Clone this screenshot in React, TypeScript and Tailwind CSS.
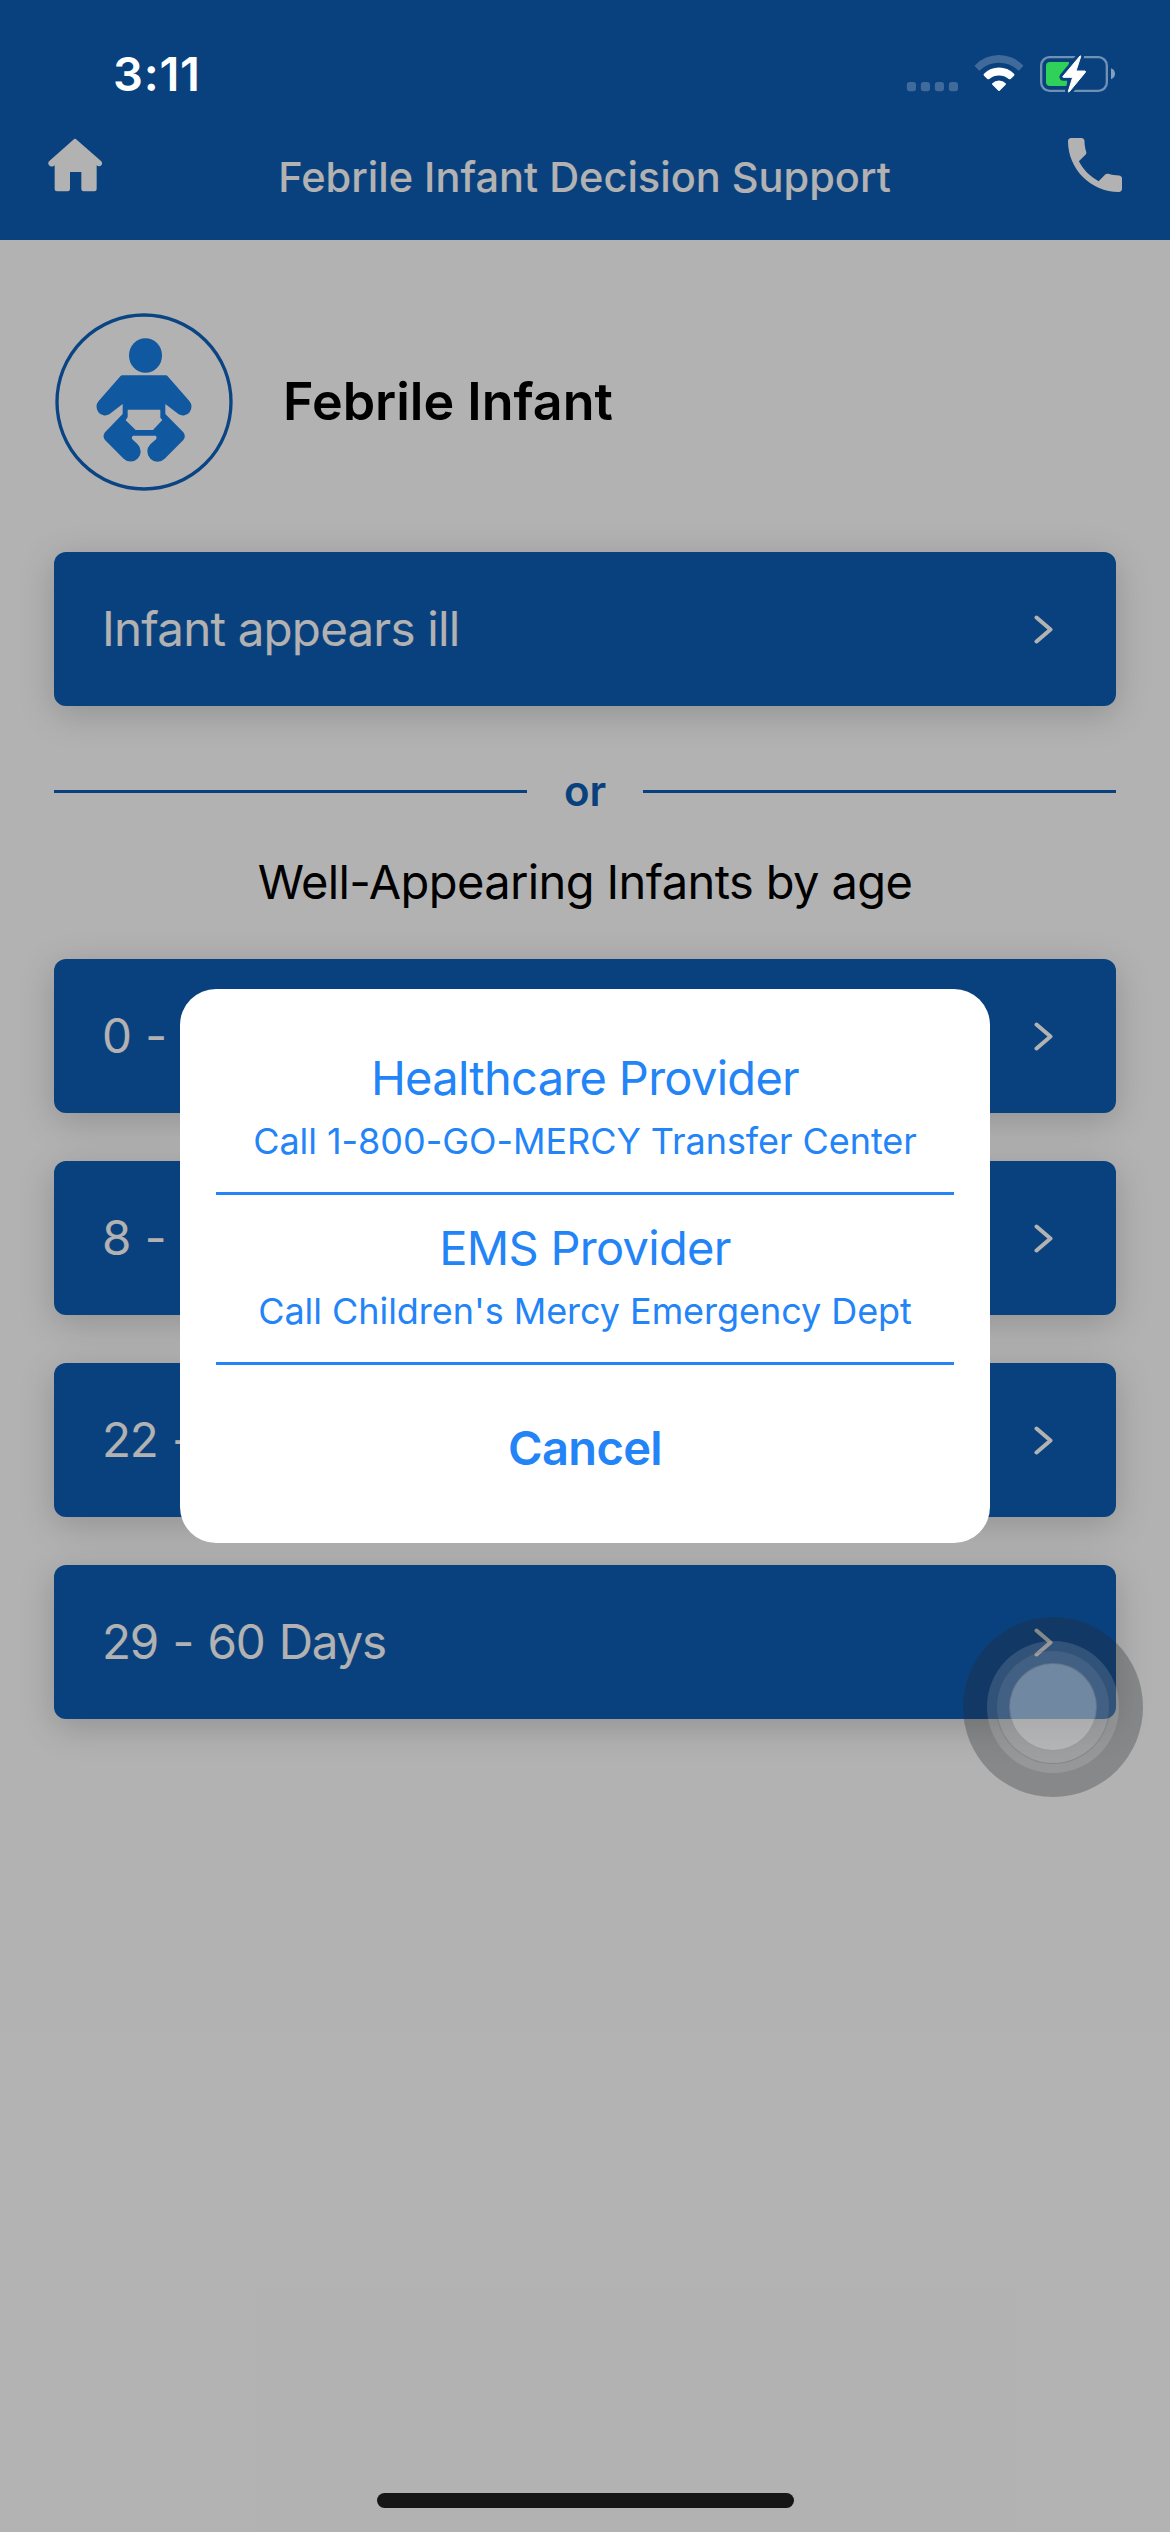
import React from "react";
import { MdPhone } from "react-icons/md";

const ageRanges = ["0 - 7 Days", "8 - 21 Days", "22 - 28 Days", "29 - 60 Days"];

function HomeIcon() {
  return (
    <svg viewBox="24 24 162 162" className="mt-[34px] h-[54px] w-[54px] shrink-0" fill="#ffffff">
      <path d="M100 29Q105 24 110 29L183 93Q189 99 184 106Q179 111 172 107L170 106V177Q170 184 163 184H131Q124 184 124 177V126H90V177Q90 184 83 184H51Q44 184 44 177V106L41 108Q33 112 27 106Q22 99 28 93Z" />
    </svg>
  );
}

function InfantIcon() {
  return (
    <svg viewBox="12 21 540 540" className="h-[180px] w-[180px] shrink-0">
      <circle cx="282" cy="291" r="261" fill="none" stroke="#0f62bd" strokeWidth="10" />
      <g fill="#187ee6">
        <ellipse cx="286.500" cy="151.500" rx="49.500" ry="52" />
        <path d="M217 211H348Q352 212 355 216L418 288A26 26 0 0 1 386 328L346 297V327L400 382Q409 394 400 405L344 461A29 29 0 0 1 301 418L319 402Q321 395 317 392H249Q244 395 246 402L263 418A29 29 0 0 1 221 461L165 405Q156 394 165 382L218 327V297L178 328A26 26 0 0 1 146 288L209 216Q212 212 217 211Z" />
      </g>
      <path d="M233 314H331V338L337 345L309 375H257L227 346L233 336Z" fill="#ffffff" />
    </svg>
  );
}

function SignalDots() {
  return (
    <svg viewBox="108 69 159 126" className="mr-[15px] h-[42px] w-[53px]" fill="#ffffff" fillOpacity="0.22">
      <rect x="110.500" y="156" width="27.500" height="27.500" rx="8" />
      <rect x="152.500" y="156" width="27.500" height="27.500" rx="8" />
      <rect x="194.500" y="156" width="27.500" height="27.500" rx="8" />
      <rect x="236.500" y="156" width="27.500" height="27.500" rx="8" />
    </svg>
  );
}

function WifiIcon() {
  return (
    <svg viewBox="312 69 150 126" className="mr-[14px] h-[42px] w-[50px]" fill="#ffffff">
      <path
        fillOpacity="0.22"
        d="M316 105A99 99 0 0 1 458 105Q461 107 458 110L448 121Q446 123 443 120A82 82 0 0 0 331 120Q328 123 326 121L316 110Q313 107 316 105Z"
      />
      <path d="M342 131A64 64 0 0 1 432 131Q435 134 432 137L422 147Q419 149 416 147A46 46 0 0 0 358 147Q355 149 352 147L342 137Q339 134 342 131Z" />
      <path d="M367 160A28 28 0 0 1 407 160Q409 162 407 164L389 182Q387 184 385 182L367 164Q365 162 367 160Z" />
    </svg>
  );
}

function BatteryIcon() {
  const bolt = "M630 78L579 139Q577 142 580 142H608L595 184Q595 188 598 185L646 127Q648 124 645 123H618L632 80Q632 76 630 78Z";
  return (
    <svg viewBox="504 69 234 126" className="h-[42px] w-[78px]">
      <rect x="513.500" y="81.500" width="197" height="101" rx="25" fill="none" stroke="#ffffff" strokeOpacity="0.42" strokeWidth="7" />
      <path d="M723 115C739 121 739 142 723 148Z" fill="#ffffff" fillOpacity="0.5" />
      <path d="M540 96H597L590 168H540Q528 168 528 156V108Q528 96 540 96Z" fill="#30d158" />
      <path d={bolt} fill="#0a417f" stroke="#0a417f" strokeWidth="20" strokeLinejoin="round" />
      <path d={bolt} fill="#ffffff" stroke="#ffffff" strokeWidth="3" strokeLinejoin="round" />
    </svg>
  );
}

function RowButton({ label, labelClass }: { label: string; labelClass: string }) {
  return (
    <button className="flex h-[154px] w-full items-center justify-between rounded-[12px] bg-[#0e5db5] pr-[63px] pl-[48px] text-left text-[47.500px] text-white shadow-[0_8px_36px_rgba(0,0,0,0.19)]">
      <span className={labelClass}>{label}</span>
      <svg viewBox="0 0 19 29" className="h-[29px] w-[19px]" fill="none" stroke="#ffffff" strokeWidth="4" strokeLinecap="round" strokeLinejoin="round">
        <path d="M2.500 2.500L16.500 14.500L2.500 26.500" />
      </svg>
    </button>
  );
}

function CallOption({ title, detail }: { title: string; detail: string }) {
  return (
    <button className="block h-[147px] w-full border-b-[3px] border-[#2384f8] text-center whitespace-nowrap">
      <span className="block text-[47px] leading-[60px] tracking-[-0.7px]">{title}</span>
      <span className="mt-[3px] block pb-[21px] text-[36px] leading-[60px] tracking-[-0.05px]">{detail}</span>
    </button>
  );
}

export default function App() {
  return (
    <div className="relative h-[2532px] w-[1170px] overflow-hidden bg-white font-[Inter,sans-serif] text-black">
      <header className="flex h-[240px] items-start justify-between bg-[#0e5db5] px-[48px] pt-[104px] text-white">
        <HomeIcon />
        <h1 className="mt-[43px] ml-[8px] text-[41.500px] leading-[60px] font-medium">Febrile Infant Decision Support</h1>
        <MdPhone className="-mr-[9px] mt-[25px] h-[72px] w-[72px]" />
      </header>

      <main className="px-[54px] pt-[72px]">
        <div className="flex items-center gap-[49px]">
          <InfantIcon />
          <h2 className="text-[52px] leading-[60px] font-semibold">Febrile Infant</h2>
        </div>
        <div className="mt-[60px]">
          <RowButton label="Infant appears ill" labelClass="tracking-[-0.8px]" />
        </div>
        <div className="mt-[56px] flex h-[59px] items-center text-[#0e5db5]">
          <div className="h-[3px] w-[473px] bg-[#0e5db5]" />
          <span className="-mt-px flex-1 text-center text-[42px] leading-[58px] font-semibold">or</span>
          <div className="h-[3px] w-[473px] bg-[#0e5db5]" />
        </div>
        <p className="mt-[31px] text-center text-[47px] leading-[60px] tracking-[-0.61px]">Well-Appearing Infants by age</p>
        <div className="mt-[47px] flex flex-col gap-[48px]">
          {ageRanges.map((label) => (
            <RowButton key={label} label={label} labelClass="tracking-[-1.300px] [word-spacing:2.500px]" />
          ))}
        </div>
      </main>

      <div className="absolute inset-0 flex items-center justify-center bg-black/30">
        <div className="h-[554px] w-[810px] rounded-[36px] bg-white px-[36px] pt-[59px] text-[#2384f8]">
          <CallOption title="Healthcare Provider" detail="Call 1-800-GO-MERCY Transfer Center" />
          <div className="mt-[23px]">
            <CallOption title="EMS Provider" detail="Call Children's Mercy Emergency Dept" />
          </div>
          <button className="mt-[53px] block w-full text-center text-[47px] leading-[60px] font-semibold tracking-[-0.65px]">Cancel</button>
        </div>
      </div>

      <div className="absolute inset-x-0 top-[44px] flex h-[60px] items-center pr-[54px] pl-[113px] text-white">
        <span className="mr-auto text-[47px] font-semibold tracking-[0.75px]">3:11</span>
        <SignalDots />
        <WifiIcon />
        <BatteryIcon />
      </div>

      <div className="absolute top-[1617px] left-[963px] flex h-[180px] w-[180px] items-center justify-center rounded-full bg-[#272a2f]/31">
        <div className="flex h-[132px] w-[132px] items-center justify-center rounded-full bg-white/13">
          <div className="flex h-[114px] w-[114px] items-center justify-center rounded-full border border-black/15 bg-white/8">
            <div className="h-[88px] w-[88px] rounded-full border border-black/15 bg-[#f0f0f2]/28" />
          </div>
        </div>
      </div>

      <div className="absolute top-[2493px] left-[377px] h-[15px] w-[417px] rounded-full bg-[#161616]" />
    </div>
  );
}
